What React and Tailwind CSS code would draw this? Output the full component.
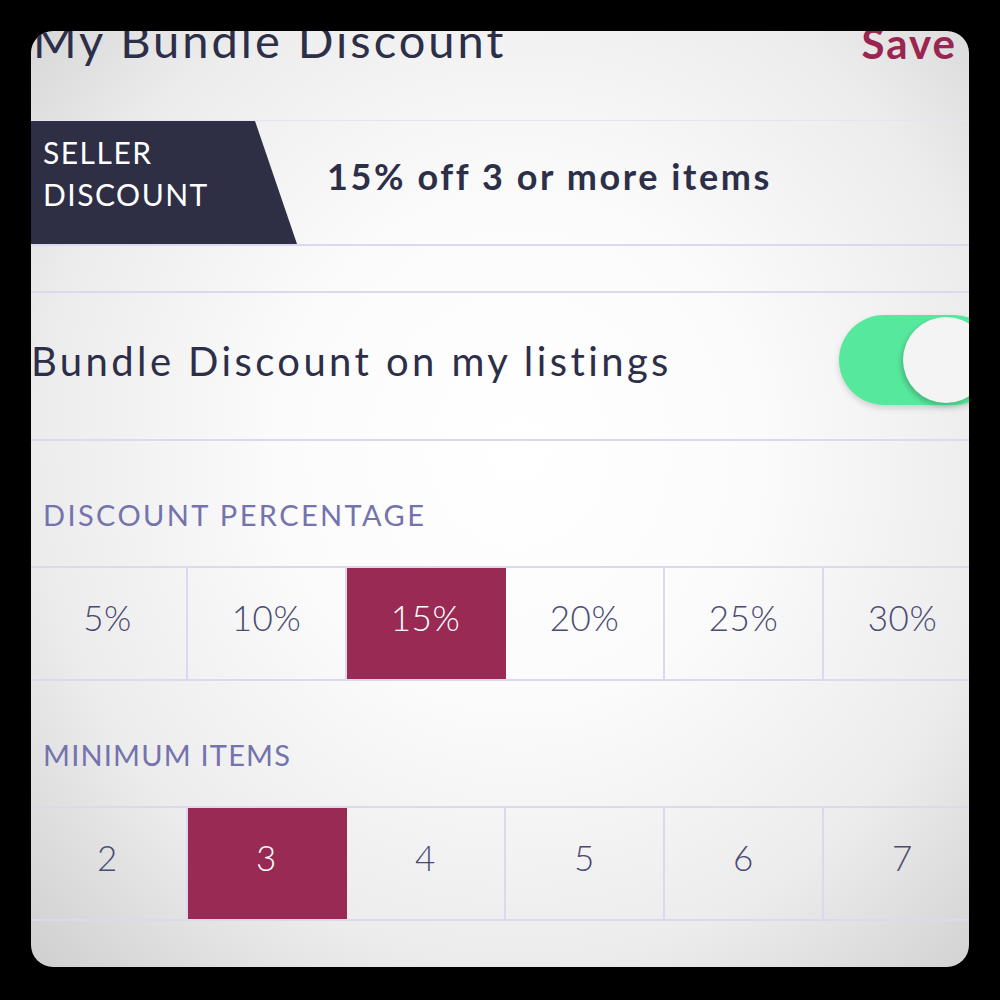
import { useState } from 'react'

const PERCENTS = ['5%', '10%', '15%', '20%', '25%', '30%']
const MIN_ITEMS = ['2', '3', '4', '5', '6', '7']

function OptionRow({ options, selected, onSelect }) {
  return (
    <div className="flex h-[115px] border-y-2 border-[#dcd9ef] overflow-hidden -ml-[2px]">
      {options.map((opt) => {
        const active = opt === selected
        return (
          <button
            key={opt}
            onClick={() => onSelect(opt)}
            className={`w-[159px] shrink-0 flex items-center justify-center pb-[12px] text-[35px] font-light tracking-[0.5px] border-r-2 ${
              active
                ? 'bg-[#982a53] text-white border-[#982a53]'
                : 'text-[#4a4a72] border-[#dcd9ef]'
            }`}
          >
            {opt}
          </button>
        )
      })}
    </div>
  )
}

function SectionLabel({ children, className }) {
  return (
    <div className="h-[125px] flex items-end pb-[37px] pl-[12px]">
      <span className={`text-[29px] leading-none text-[#7473ad] ${className}`}>{children}</span>
    </div>
  )
}

export default function App() {
  const [enabled, setEnabled] = useState(true)
  const [percent, setPercent] = useState('15%')
  const [minItems, setMinItems] = useState('3')

  return (
    <div className="w-[1000px] h-[1000px] bg-black p-[31px] font-['Lato','Open_Sans',sans-serif]">
      <div className="relative w-[938px] h-[936px] rounded-[22px] overflow-hidden bg-[radial-gradient(ellipse_at_52%_45%,#ffffff_0%,#fbfbfb_35%,#ececec_70%,#cfcfcf_100%)]">
        {/* header */}
        <div className="h-[89px] flex justify-between items-start">
          <h1 className="-mt-[21px] pl-[2px] text-[47px] leading-[60px] tracking-[3px] text-[#2d2e48]">My Bundle Discount</h1>
          <button className="-mt-[18px] pr-[12px] text-[42px] leading-[60px] font-bold tracking-[2px] text-[#9a2550]">Save</button>
        </div>

        {/* current discount summary */}
        <div className="h-[126px] flex items-center border-t border-b-2 border-t-[#e6e4f0] border-b-[#dcd9ef]">
          <div className="h-full w-[266px] shrink-0 bg-[#2e2f45] [clip-path:polygon(0_0,224px_0,266px_100%,0_100%)] flex flex-col justify-center pl-[12px] pb-[20px]">
            <span className="text-[30px] leading-[42px] tracking-[1.5px] text-white">SELLER</span>
            <span className="text-[30px] leading-[42px] tracking-[1.5px] text-white">DISCOUNT</span>
          </div>
          <span className="ml-[30px] -mt-[14px] text-[36px] font-bold tracking-[2.6px] text-[#2d2e48]">15% off 3 or more items</span>
        </div>

        <div className="h-[45px]" />

        {/* enable toggle */}
        <div className="relative h-[150px] flex items-center pb-[10px] border-y-2 border-[#dcd9ef]">
          <span className="text-[40px] tracking-[3.4px] text-[#2d2e48]">Bundle Discount on my listings</span>
          <button
            onClick={() => setEnabled(!enabled)}
            className={`absolute left-[808px] top-[22px] w-[160px] h-[90px] rounded-full shadow-[0_3px_6px_rgba(0,0,0,0.15)] ${
              enabled ? 'bg-[#56e89c]' : 'bg-[#d9d9e3]'
            }`}
          >
            <span
              className={`absolute top-[2px] w-[86px] h-[86px] rounded-full bg-[#f4f4f4] shadow-[-2px_3px_5px_rgba(0,0,0,0.2)] ${
                enabled ? 'left-[64px]' : 'left-[2px]'
              }`}
            />
          </button>
        </div>

        <SectionLabel className="tracking-[2.4px]">DISCOUNT PERCENTAGE</SectionLabel>
        <OptionRow options={PERCENTS} selected={percent} onSelect={setPercent} />

        <SectionLabel className="tracking-[1.2px]">MINIMUM ITEMS</SectionLabel>
        <OptionRow options={MIN_ITEMS} selected={minItems} onSelect={setMinItems} />
      </div>
    </div>
  )
}
